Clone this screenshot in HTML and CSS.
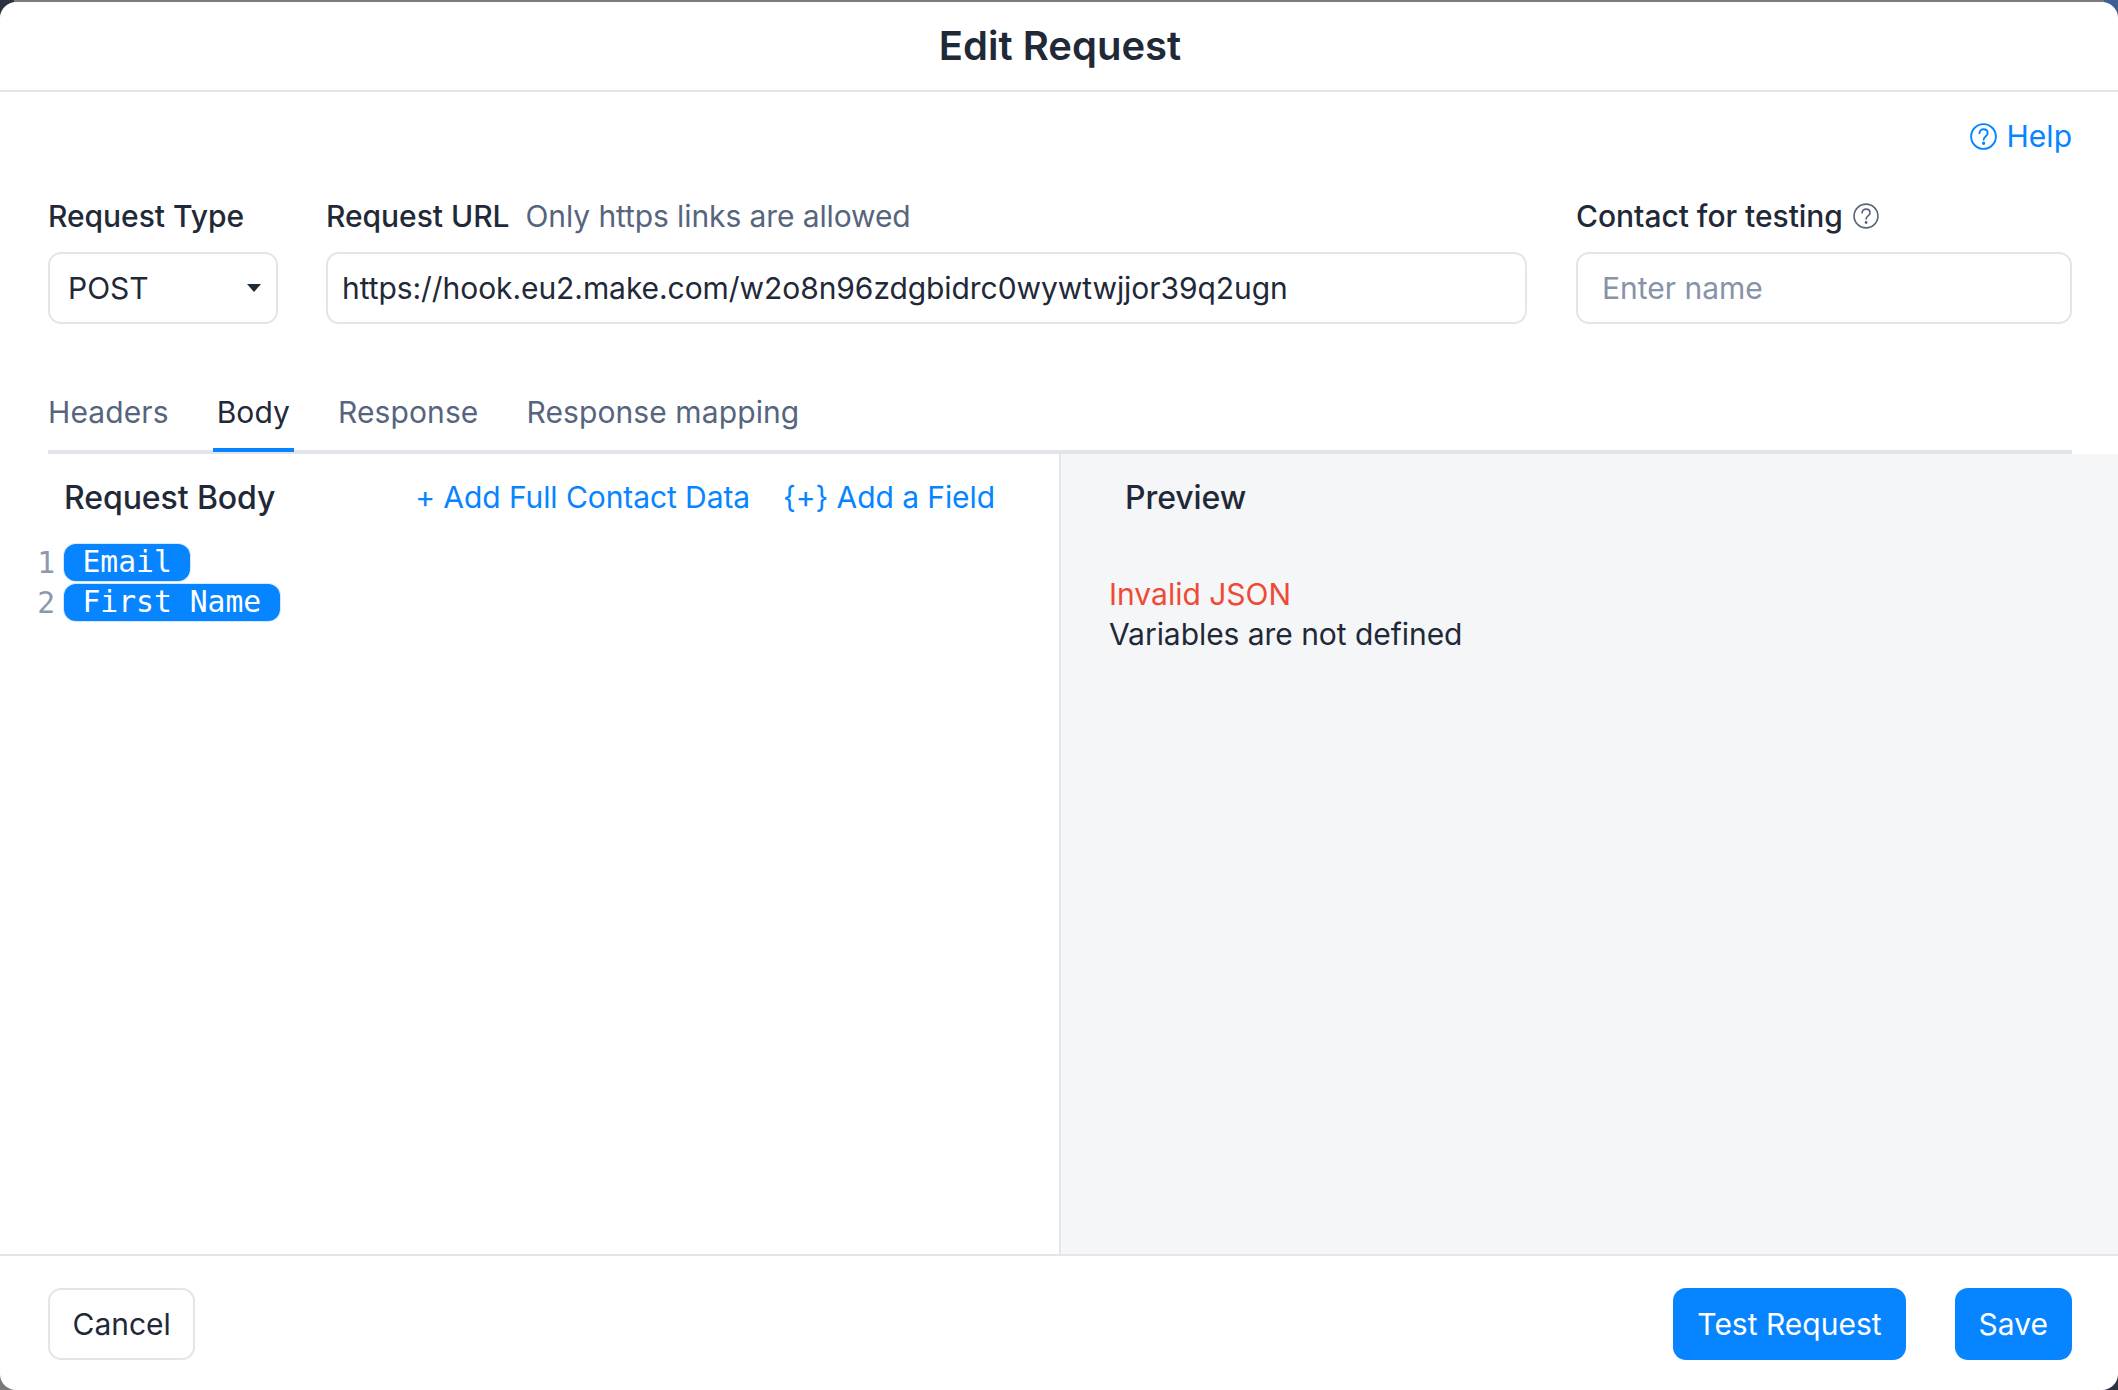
FILE: index.html
```html
<!DOCTYPE html>
<html lang="en">
<head>
<meta charset="utf-8">
<title>Edit Request</title>
<link rel="stylesheet" href="styles.css">
</head>
<body>
<div class="backdrop-mark mark-tl"></div>
<div class="backdrop-mark mark-tr"></div>
<div class="backdrop-mark mark-br"></div>
<div class="modal">
  <header class="modal-header"><h1 class="modal-title">Edit Request</h1></header>
  <div class="form-area">
    <div class="help-row">
      <a class="help-link">
        <svg class="help-icon" viewBox="0 0 24 24" fill="none" stroke="currentColor" stroke-width="1.7" stroke-linecap="round"><circle cx="12" cy="12" r="11"/><path d="M8.4 9.2c0-2.2 1.6-3.6 3.7-3.6s3.6 1.4 3.6 3.3c0 2.9-3.6 3.1-3.6 5.9"/><circle cx="12.1" cy="18" r=".6" fill="currentColor"/></svg>
        <span>Help</span>
      </a>
    </div>
    <div class="fields">
      <div class="field field-type">
        <div class="label">Request Type</div>
        <div class="control select">POST<span class="caret"></span></div>
      </div>
      <div class="field field-url">
        <div class="label"><span>Request URL</span><span class="label-note">Only https links are allowed</span></div>
        <div class="control url">https://hook.eu2.make.com/w2o8n96zdgbidrc0wywtwjjor39q2ugn</div>
      </div>
      <div class="field field-contact">
        <div class="label"><span>Contact for testing</span>
          <svg class="info-icon" viewBox="0 0 24 24" fill="none" stroke="currentColor" stroke-width="1.5" stroke-linecap="round"><circle cx="12" cy="12" r="11"/><path d="M8.4 9.2c0-2.2 1.6-3.6 3.7-3.6s3.6 1.4 3.6 3.3c0 2.9-3.6 3.1-3.6 5.9"/><circle cx="12.1" cy="18" r=".6" fill="currentColor"/></svg>
        </div>
        <div class="control placeholder">Enter name</div>
      </div>
    </div>
    <nav class="tabs">
      <a class="tab">Headers</a>
      <a class="tab active">Body</a>
      <a class="tab">Response</a>
      <a class="tab">Response mapping</a>
    </nav>
  </div>
  <main class="panes">
    <section class="pane-editor">
      <div class="editor-head">
        <h2 class="pane-title">Request Body</h2>
        <div class="editor-actions">
          <a class="action">+ Add Full Contact Data</a>
          <a class="action"><span class="brace">{+}</span> Add a Field</a>
        </div>
      </div>
      <div class="code">
        <div class="code-line"><span class="line-no">1</span><span class="pill">Email</span></div>
        <div class="code-line"><span class="line-no">2</span><span class="pill">First Name</span></div>
      </div>
    </section>
    <section class="pane-preview">
      <h2 class="pane-title preview-title">Preview</h2>
      <div class="preview-error">Invalid JSON</div>
      <div class="preview-msg">Variables are not defined</div>
    </section>
  </main>
  <footer class="modal-footer">
    <button class="btn btn-ghost">Cancel</button>
    <div class="footer-right">
      <button class="btn btn-primary btn-test">Test Request</button>
      <button class="btn btn-primary">Save</button>
    </div>
  </footer>
</div>
</body>
</html>
```
FILE: styles.css
```css
* { box-sizing: border-box; }
html, body { margin: 0; height: 100%; }
body {
  background: #7b7b7b;
  padding-top: 2px;
  font-family: Inter, "Noto Sans", sans-serif;
  font-size: 30px;
  color: #1f2937;
  overflow: hidden;
  position: relative;
}
.backdrop-mark { position: absolute; width: 14px; height: 14px; background: #2c3240; }
.mark-tl { left: 0; top: 0; }
.mark-tr { right: 0; top: 0; background: #3d5f94; }
.mark-br { right: 0; bottom: 0; }
.modal {
  position: relative;
  height: 1388px;
  background: #fff;
  border-radius: 16px;
  display: flex;
  flex-direction: column;
  overflow: hidden;
}
.modal-header {
  height: 90px;
  border-bottom: 2px solid #e2e5ea;
  display: flex;
  align-items: center;
  justify-content: center;
}
.modal-title { margin: 0; padding-left: 2px; font-size: 40px; font-weight: 600; line-height: 44px; }
.form-area { padding: 0 46px 0 48px; }
.help-row { height: 88px; display: flex; align-items: center; justify-content: flex-end; }
.help-link { display: flex; align-items: center; gap: 10px; color: #0784ff; }
.help-icon { width: 27px; height: 27px; }
.fields { display: flex; gap: 48px; }
.field-type { width: 230px; flex: none; }
.field-url { flex: 1; }
.field-contact { width: 496px; flex: none; margin-left: 1px; }
.label { height: 72px; font-weight: 500; display: flex; align-items: center; gap: 10px; white-space: nowrap; letter-spacing: -0.03px; }
.label-note { font-weight: 400; color: #56657d; margin-left: 6px; letter-spacing: -0.1px; }
.info-icon { width: 26px; height: 26px; color: #56657d; }
.control {
  height: 72px;
  border: 2px solid #e2e5ea;
  border-radius: 13px;
  display: flex;
  align-items: center;
  white-space: nowrap;
}
.select { padding: 0 18px; position: relative; }
.caret {
  position: absolute;
  right: 15px;
  top: 30px;
  border-left: 7px solid transparent;
  border-right: 7px solid transparent;
  border-top: 8px solid #1f2937;
}
.url { padding: 0 14px; letter-spacing: -0.07px; }
.placeholder { padding: 0 24px; color: #8693a8; }
.tabs {
  margin-top: 36px;
  height: 94px;
  border-bottom: 4px solid #e2e5ea;
  display: flex;
  gap: 40px;
}
.tab {
  padding: 0 4px;
  margin-bottom: -2px;
  height: 92px;
  line-height: 104px;
  color: #56657d;
  letter-spacing: 0.1px;
}
.tab:first-child { padding-left: 0; }
.tab.active { color: #1f2937; border-bottom: 4px solid #0784ff; }
.panes { flex: 1; display: flex; min-height: 0; }
.pane-editor { width: 1061px; flex: none; border-right: 2px solid #e2e5ea; }
.editor-head { display: flex; justify-content: space-between; align-items: center; height: 80px; padding: 6px 64px 0 64px; }
.pane-title { margin: 0; font-size: 32px; font-weight: 500; letter-spacing: -0.08px; }
.editor-actions { display: flex; gap: 33px; color: #0784ff; letter-spacing: -0.08px; }
.code { padding-top: 8px; font-family: "DejaVu Sans Mono", monospace; font-size: 29.7px; }
.code-line { display: flex; align-items: center; height: 40px; }
.line-no { width: 64px; padding-right: 9px; text-align: right; color: #8b98ad; }
.pill {
  background: #0784ff;
  color: #fff;
  border-radius: 12px;
  height: 37px;
  line-height: 36px;
  padding: 0 18.5px;
  box-shadow: 0 0 0 1px #d4e8ff;
}
.pane-preview { flex: 1; background: #f5f6f8; padding: 0 48px; }
.preview-title { height: 84px; line-height: 88px; margin-left: 16px; }
.preview-error { margin-top: 36px; line-height: 40px; color: #ef4a36; }
.preview-msg { line-height: 40px; letter-spacing: -0.05px; }
.modal-footer {
  height: 136px;
  border-top: 2px solid #e2e5ea;
  padding: 32px 46px 0 48px;
  display: flex;
  justify-content: space-between;
  align-items: flex-start;
}
.footer-right { display: flex; gap: 49px; }
.btn {
  height: 72px;
  padding: 0 24px;
  border-radius: 13px;
  font: inherit;
  border: none;
}
.btn-ghost { background: #fff; border: 2px solid #e2e5ea; color: #1f2937; padding: 0 22.5px; }
.btn-primary { background: #0784ff; color: #fff; }
```
